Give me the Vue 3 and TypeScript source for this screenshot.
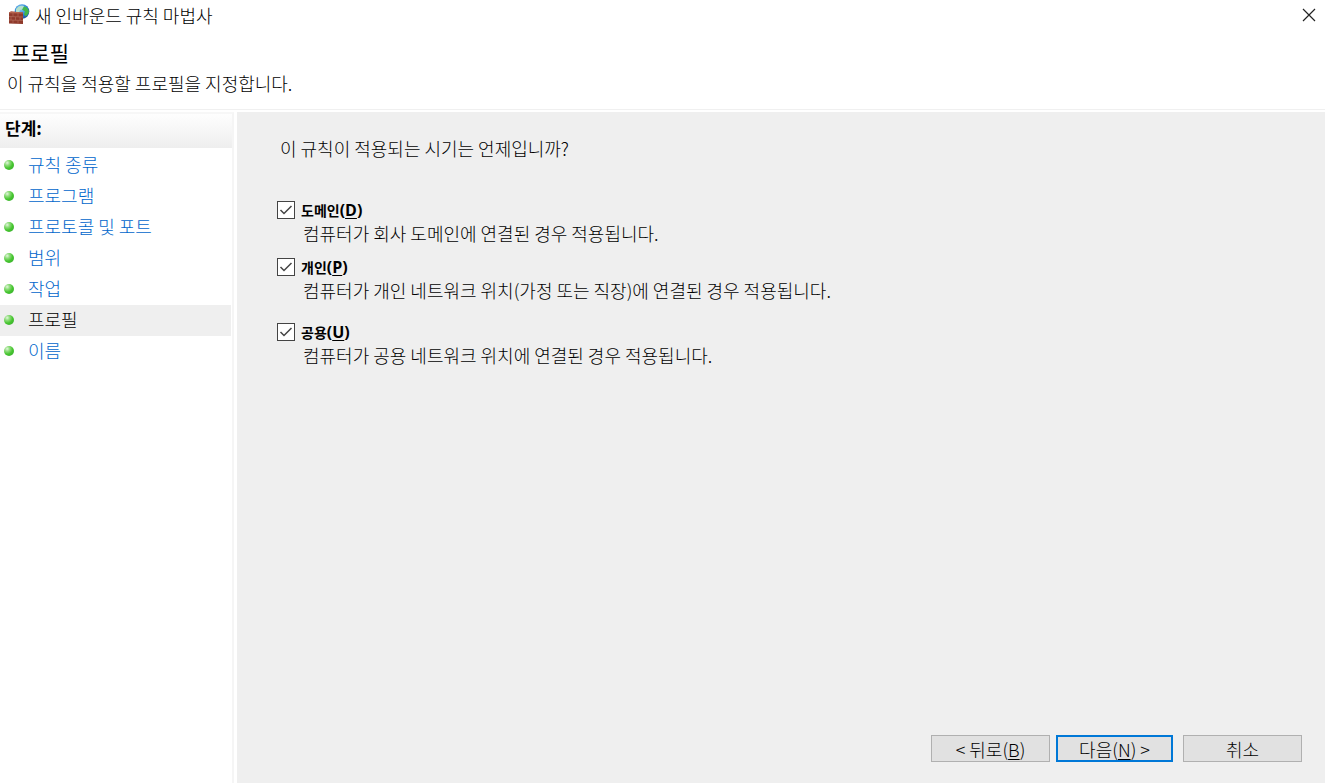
<script setup lang="ts">
import { ref } from 'vue'

interface Profile {
  id: string
  name: string
  key: string
  description: string
  checked: boolean
}

const steps: string[] = ['규칙 종류', '프로그램', '프로토콜 및 포트', '범위', '작업', '프로필', '이름']
const currentStep = ref('프로필')

const profiles = ref<Profile[]>([
  { id: 'domain', name: '도메인', key: 'D', description: '컴퓨터가 회사 도메인에 연결된 경우 적용됩니다.', checked: true },
  { id: 'private', name: '개인', key: 'P', description: '컴퓨터가 개인 네트워크 위치(가정 또는 직장)에 연결된 경우 적용됩니다.', checked: true },
  { id: 'public', name: '공용', key: 'U', description: '컴퓨터가 공용 네트워크 위치에 연결된 경우 적용됩니다.', checked: true },
])
</script>

<template>
  <div class="wizard">
    <div class="titlebar">
      <svg class="app-icon" viewBox="0 0 22 22" aria-hidden="true">
        <defs>
          <radialGradient id="globe" cx="0.4" cy="0.3" r="0.75">
            <stop offset="0" stop-color="#8fd4f8" />
            <stop offset="0.55" stop-color="#2f86d8" />
            <stop offset="1" stop-color="#174a9c" />
          </radialGradient>
        </defs>
        <circle cx="14" cy="7.500" r="7.300" fill="url(#globe)" />
        <path d="M8 5c2-3 5-4 8-3l-1 3-3 1-1 3-3-1z" fill="#b4e0cc" />
        <path d="M16 2.500c3 0 5 3 5 6l-3 4-2-2 1-3-3-2z" fill="#42b64a" />
        <path d="M1 8.500l2-1 12 1v11.500l-14-.5z" fill="#8f3a2b" />
        <path d="M1 8.500l2-1 12 1v1L1 9.300z" fill="#b8654f" />
        <path d="M1 12.500L15 13M1 16L15 16.500M5 9v3.500M10 9v3.500M3 12.500V16M7.500 13v3M12 13v3M5 16v3.500M10 16.500v3" fill="none" stroke="#b97361" stroke-width="0.6" />
      </svg>
      <span class="window-title">새 인바운드 규칙 마법사</span>
      <button class="close" type="button" aria-label="닫기">
        <svg viewBox="0 0 14 14" aria-hidden="true">
          <path d="M1 1l12 12M13 1L1 13" fill="none" stroke="#222" stroke-width="1.200" />
        </svg>
      </button>
    </div>

    <header class="heading">
      <h1>프로필</h1>
      <p>이 규칙을 적용할 프로필을 지정합니다.</p>
    </header>

    <div class="body">
      <nav class="sidebar">
        <h2>단계:</h2>
        <ul>
          <li v-for="step in steps" :key="step" :class="{ current: step === currentStep }">
            <span class="dot"></span>
            <span v-if="step === currentStep" class="step" aria-current="step">{{ step }}</span>
            <a v-else class="step" href="#" @click.prevent="currentStep = step">{{ step }}</a>
          </li>
        </ul>
      </nav>

      <main class="content">
        <p class="question">이 규칙이 적용되는 시기는 언제입니까?</p>
        <div class="options">
          <div v-for="p in profiles" :key="p.id" class="option" :class="p.id">
            <div class="choice">
              <input :id="p.id" v-model="p.checked" type="checkbox" :aria-describedby="p.id + '-note'" />
              <label :for="p.id">{{ p.name }}<span class="key">(<u>{{ p.key }}</u>)</span></label>
            </div>
            <p :id="p.id + '-note'">{{ p.description }}</p>
          </div>
        </div>
        <footer class="actions">
          <button type="button">&lt; 뒤로(<u>B</u>)</button>
          <button type="button" class="primary">다음(<u>N</u>) &gt;</button>
          <button type="button" class="cancel">취소</button>
        </footer>
      </main>
    </div>
  </div>
</template>

<style>
body {
  margin: 0;
}
</style>

<style scoped>
.wizard {
  display: flex;
  flex-direction: column;
  min-height: 100vh;
  background: #fff;
  color: #000;
  font-family: "Noto Sans CJK KR", sans-serif;
  font-size: 18px;
  font-weight: 300;
  line-height: 24px;
}

h1,
h2,
p,
ul {
  margin: 0;
  padding: 0;
}

.titlebar {
  display: flex;
  align-items: center;
  height: 30px;
  padding: 0 8px;
}

.app-icon {
  width: 22px;
  height: 22px;
}

.window-title {
  flex: 1;
  padding-left: 5px;
}

.close {
  display: flex;
  align-items: center;
  justify-content: center;
  width: 16px;
  height: 24px;
  padding: 0;
  border: 0;
  background: none;
}

.close svg {
  width: 14px;
  height: 14px;
}

.heading {
  padding: 7px 7px 10px;
  border-bottom: 1px solid #f0f0f0;
}

.heading h1 {
  padding-left: 4px;
  font-size: 21px;
  font-weight: 400;
  line-height: 30px;
}

.heading p {
  line-height: 32px;
}

.body {
  display: flex;
  flex: 1;
  padding-top: 2px;
}

.sidebar {
  box-sizing: border-box;
  flex: none;
  width: 234px;
  border-top: 2px solid #f7f7f7;
  border-right: 2px solid #f5f5f5;
}

.sidebar h2 {
  height: 34px;
  padding: 0 5px;
  background: linear-gradient(#fefefe, #eee);
  font-size: 17px;
  font-weight: 700;
  line-height: 28px;
}

.sidebar ul {
  padding-top: 2px;
  list-style: none;
}

.sidebar li {
  display: flex;
  align-items: center;
  gap: 14px;
  height: 31px;
  margin-right: 1px;
  padding-left: 4px;
}

.sidebar li.current {
  background: #efefef;
}

.step {
  padding-bottom: 3px;
}

.sidebar a {
  color: #0066cc;
  text-decoration: none;
}

.dot {
  width: 10px;
  height: 10px;
  margin-bottom: 2px;
  border-radius: 50%;
  background: radial-gradient(circle at 32% 28%, #e2f6dc 0, #8fdc7c 25%, #45c52e 55%, #3aa634 100%);
}

.content {
  display: flex;
  flex: 1;
  flex-direction: column;
  margin-left: 3px;
  padding: 24px 23px 21px 40px;
  background: #efefef;
}

.question {
  padding-left: 3px;
}

.options {
  flex: 1;
  padding-top: 40px;
}

.option {
  padding-bottom: 11px;
}

.option.private {
  padding-bottom: 19px;
}

.choice {
  display: flex;
  align-items: center;
  gap: 6px;
  height: 20px;
}

.choice input {
  appearance: none;
  width: 18px;
  height: 18px;
  margin: 0;
  border: 1px solid #444;
  background: #fff;
}

.choice input:checked {
  background: #fff url("data:image/svg+xml,%3Csvg xmlns='http://www.w3.org/2000/svg' viewBox='0 0 16 16'%3E%3Cpath d='M2.500 8L6 11.500L13.500 4' fill='none' stroke='%23444' stroke-width='1.500'/%3E%3C/svg%3E") center / 16px 16px no-repeat;
}

.choice label {
  font-size: 14px;
  font-weight: 700;
  line-height: 20px;
}

.key {
  font-family: "Open Sans", sans-serif;
  font-size: 16px;
}

.option p {
  padding-left: 26px;
  line-height: 26px;
}

u {
  text-underline-offset: 2px;
}

.actions {
  display: flex;
  justify-content: flex-end;
  gap: 6px;
}

.actions button {
  box-sizing: border-box;
  width: 119px;
  height: 27px;
  padding: 0;
  border: 1px solid #b0b0b0;
  background: #e1e1e1;
  color: #000;
  font: inherit;
  line-height: 24px;
}

.actions .primary {
  width: 117px;
  border: 2px solid #0078d7;
  line-height: 22px;
}

.actions .cancel {
  margin-left: 4px;
}
</style>
